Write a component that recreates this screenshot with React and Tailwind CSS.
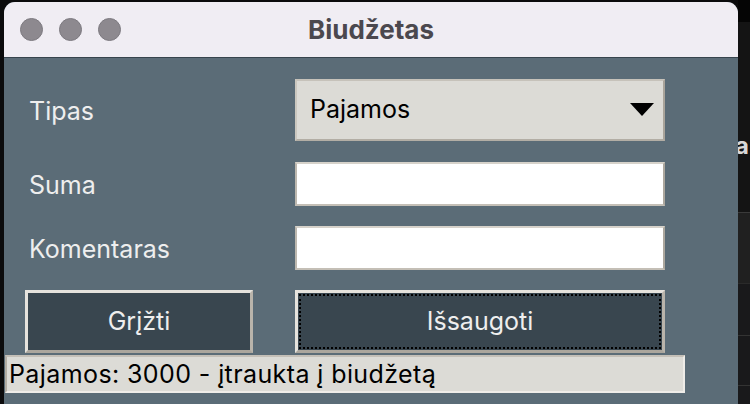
import React from "react";

export default function App() {
  const font = { fontFamily: "Inter, 'Noto Sans', 'Liberation Sans', sans-serif" };
  return (
    <div className="relative w-[750px] h-[404px] overflow-hidden bg-[#0b0b0c]" style={font}>
      {/* background app behind window (right strip) */}
      <div className="absolute left-[738px] top-0 w-[12px] h-[404px] flex flex-col">
        <div className="h-[22px] bg-[#050505]" />
        <div className="h-[190px] bg-[#141414] relative">
          <span className="absolute left-[-3px] top-[112px] text-[24px] font-bold leading-none text-[#d8d8d8]">a</span>
        </div>
        <div className="h-px bg-[#3a3a3a]" />
        <div className="h-[70px] bg-[#202020]" />
        <div className="h-[52px] bg-[#19191b] border-t border-[#2a2a2a]" />
        <div className="h-[50px] bg-[#19191b] border-t border-[#333]" />
        <div className="flex-1 bg-[#19191b] border-t border-[#333]" />
      </div>

      {/* window */}
      <div className="absolute left-[4px] top-[2px] w-[734px] h-[410px] rounded-t-[11px] overflow-hidden bg-[#5b6c77] flex flex-col">
        {/* title bar */}
        <div className="relative h-[56px] bg-[#f0edf3] border-b border-[#37444d] flex items-center justify-center shrink-0">
          <div className="absolute left-[16px] top-[16px] flex gap-[16px]">
            <div className="w-[23px] h-[23px] rounded-full bg-[#8d898f] border border-[#7d7a80]" />
            <div className="w-[23px] h-[23px] rounded-full bg-[#8d898f] border border-[#7d7a80]" />
            <div className="w-[23px] h-[23px] rounded-full bg-[#8d898f] border border-[#7d7a80]" />
          </div>
          <span className="text-[26px] font-bold text-[#4b484e] leading-none">Biudžetas</span>
        </div>

        {/* body */}
        <div className="flex flex-col pt-[21px] pl-[21px]">
          <div className="flex items-center h-[62px]">
            <div className="w-[228px] pl-[4px] pt-[3px] text-[25px] text-[#eeeeee]">Tipas</div>
            <div className="ml-[42px] w-[370px] h-[62px] bg-[#dcdbd6] border-2 border-t-[#c6c2ba] border-l-[#cbc7bf] border-b-[#b3aea5] border-r-[#a9a49b] flex items-center justify-between pl-[13px] pr-[9px]">
              <span className="text-[25px] text-black">Pajamos</span>
              <svg width="24" height="14" viewBox="0 0 24 14">
                <polygon points="0,0 24,0 12,13" fill="#000" />
              </svg>
            </div>
          </div>

          <div className="flex items-center h-[44px] mt-[21px]">
            <div className="w-[228px] pl-[4px] pt-[3px] text-[25px] text-[#eeeeee]">Suma</div>
            <div className="ml-[42px] w-[370px] h-[44px] bg-white border-2 border-t-[#d6d2ca] border-l-[#bdb8af] border-b-[#c4bfb6] border-r-[#aca79e]" />
          </div>

          <div className="flex items-center h-[44px] mt-[20px]">
            <div className="w-[228px] pl-[4px] pt-[3px] text-[25px] text-[#eeeeee]">Komentaras</div>
            <div className="ml-[42px] w-[370px] h-[44px] bg-white border-2 border-t-[#d6d2ca] border-l-[#bdb8af] border-b-[#c4bfb6] border-r-[#aca79e]" />
          </div>

          <div className="flex h-[63px] mt-[20px]">
            <div className="w-[228px] h-[63px] bg-[#39464f] border-[3px] border-t-[#e6e3dd] border-l-[#e6e3dd] border-b-[#aba69d] border-r-[#b9b4ab] flex items-center justify-center">
              <span className="text-[25px] text-[#eeeeee]">Grįžti</span>
            </div>
            <div className="ml-[42px] w-[370px] h-[63px] bg-[#39464f] border-[3px] border-t-[#e6e3dd] border-l-[#e6e3dd] border-b-[#aba69d] border-r-[#b9b4ab] p-[1px]">
              <div className="w-full h-full border-2 border-dotted border-black flex items-center justify-center">
                <span className="text-[25px] text-[#eeeeee]">Išsaugoti</span>
              </div>
            </div>
          </div>
        </div>

        <div className="ml-[1px] mt-[2px] w-[680px] h-[38px] bg-[#dcdbd6] border-2 border-t-[#c4bfb7] border-l-[#b3aea5] border-b-[#efede9] border-r-[#eeece8] flex items-center pl-[2px]">
          <span className="text-[25px] text-black whitespace-nowrap leading-none tracking-[0.4px]">Pajamos: 3000 - įtraukta į biudžetą</span>
        </div>
      </div>
    </div>
  );
}
